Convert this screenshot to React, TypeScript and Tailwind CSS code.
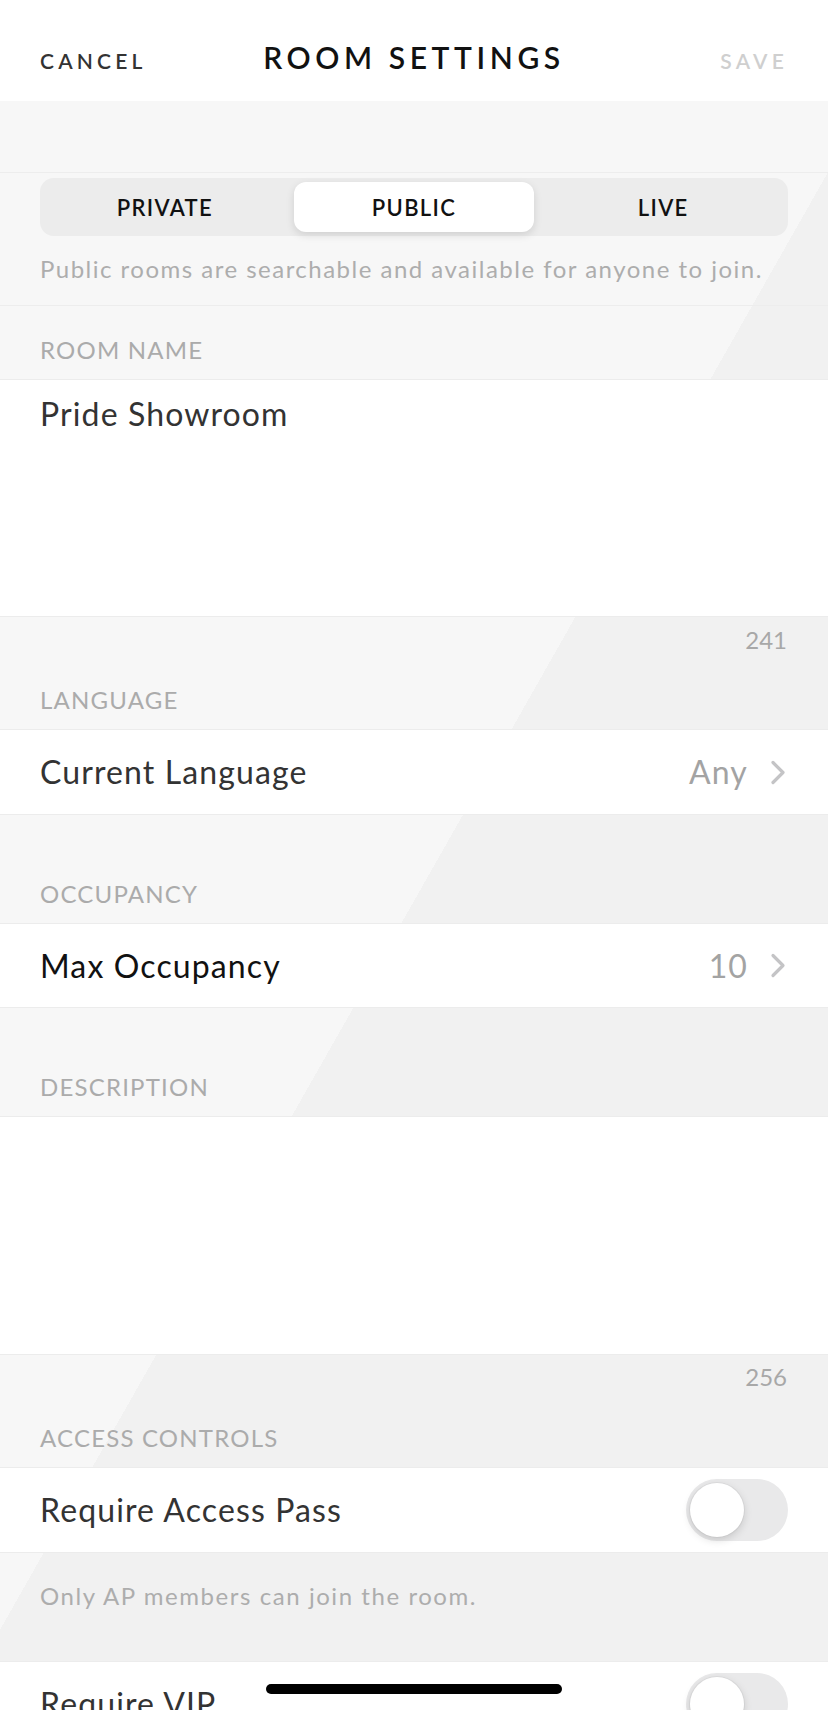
import React from "react";

function Chevron() {
  return (
    <svg width="16" height="25" viewBox="0 0 16 25" className="ml-[22px]">
      <polyline points="3,2.5 13,12.5 3,22.5" fill="none" stroke="#c4c4c6" strokeWidth="3.2" strokeLinecap="round" strokeLinejoin="round" />
    </svg>
  );
}

function Toggle() {
  return (
    <div className="w-[102px] h-[62px] rounded-full bg-[#e9e9ea] flex items-center p-[4px]">
      <div className="w-[54px] h-[54px] rounded-full bg-white shadow-[0_3px_8px_rgba(0,0,0,0.15),0_0_0_1px_rgba(0,0,0,0.04)]" />
    </div>
  );
}

function Label({ children }: { children: React.ReactNode }) {
  return (
    <div className="px-[40px] pb-[14px] text-[24px] leading-[30px] text-[#ababab] tracking-[0.05em]">{children}</div>
  );
}

export default function App() {
  return (
    <div className="relative w-[828px] h-[1710px] overflow-hidden font-['Lato',sans-serif] bg-[linear-gradient(119.6deg,#f7f7f7_805px,#f1f1f1_805px)]">
      {/* Header */}
      <div className="h-[101px] bg-white grid grid-cols-[1fr_auto_1fr] items-center px-[40px] pt-[20px]">
        <div className="text-[21px] font-semibold tracking-[0.2em] text-[#333]">CANCEL</div>
        <div className="text-[30px] font-semibold tracking-[0.153em] text-[#111] mb-[6px]">ROOM SETTINGS</div>
        <div className="text-[21px] font-semibold tracking-[0.2em] text-[#cfcfcf] text-right">SAVE</div>
      </div>

      <div className="h-[72px] border-b border-[#ededed]" />

      {/* Segmented */}
      <div className="h-[133px] border-b border-[#ededed] px-[40px] pt-[5px]">
        <div className="h-[58px] rounded-[14px] bg-[#ececec] p-[4px] grid grid-cols-3">
          <div className="flex items-center justify-center text-[22px] font-semibold tracking-[0.06em] text-[#111] pr-[5px]">PRIVATE</div>
          <div className="mx-[3px] rounded-[12px] bg-white shadow-[0_3px_8px_rgba(0,0,0,0.12)] flex items-center justify-center text-[22px] font-semibold tracking-[0.06em] text-[#111]">PUBLIC</div>
          <div className="flex items-center justify-center text-[22px] font-semibold tracking-[0.06em] text-[#111] pl-[5px]">LIVE</div>
        </div>
        <div className="mt-[18px] text-[24px] leading-[30px] text-[#adadad] tracking-[0.062em]">Public rooms are searchable and available for anyone to join.</div>
      </div>

      {/* Room name */}
      <div className="h-[73px] flex flex-col justify-end">
        <Label>ROOM NAME</Label>
      </div>
      <div className="h-[238px] bg-white border-y border-[#ececec] px-[40px] pt-[16px]">
        <div className="text-[32px] leading-[36px] text-[#333] tracking-[0.035em]">Pride Showroom</div>
      </div>

      {/* Language */}
      <div className="h-[112px] flex flex-col justify-between">
        <div className="px-[41px] pt-[8px] text-right text-[24px] leading-[30px] text-[#a8a8a8]">241</div>
        <Label>LANGUAGE</Label>
      </div>
      <div className="h-[86px] bg-white border-y border-[#ececec] px-[40px] pr-[42px] flex items-center">
        <div className="flex-1 text-[32px] text-[#333] tracking-[0.035em]">Current Language</div>
        <div className="text-[32px] text-[#a3a3a3] tracking-[0.035em]">Any</div>
        <Chevron />
      </div>

      {/* Occupancy */}
      <div className="h-[108px] flex flex-col justify-end">
        <Label>OCCUPANCY</Label>
      </div>
      <div className="h-[85px] bg-white border-y border-[#ececec] px-[40px] pr-[42px] flex items-center">
        <div className="flex-1 text-[32px] text-[#111] tracking-[0.035em]">Max Occupancy</div>
        <div className="text-[32px] text-[#a3a3a3] tracking-[0.035em]">10</div>
        <Chevron />
      </div>

      {/* Description */}
      <div className="h-[108px] flex flex-col justify-end">
        <Label>DESCRIPTION</Label>
      </div>
      <div className="h-[239px] bg-white border-y border-[#ececec]" />

      {/* Access controls */}
      <div className="h-[112px] flex flex-col justify-between">
        <div className="px-[41px] pt-[7px] text-right text-[24px] leading-[30px] text-[#a8a8a8]">256</div>
        <Label>ACCESS CONTROLS</Label>
      </div>
      <div className="h-[86px] bg-white border-y border-[#ececec] px-[40px] flex items-center">
        <div className="flex-1 text-[32px] text-[#333] tracking-[0.035em]">Require Access Pass</div>
        <Toggle />
      </div>
      <div className="h-[108px] px-[40px] pt-[28px]">
        <div className="text-[24px] leading-[30px] text-[#adadad] tracking-[0.065em]">Only AP members can join the room.</div>
      </div>
      <div className="h-[86px] bg-white border-y border-[#ececec] px-[40px] flex items-center">
        <div className="flex-1 text-[32px] text-[#333] tracking-[0.035em]">Require VIP</div>
        <Toggle />
      </div>

      {/* Home indicator */}
      <div className="absolute left-[266px] top-[1684px] w-[296px] h-[10px] rounded-full bg-black" />
    </div>
  );
}
